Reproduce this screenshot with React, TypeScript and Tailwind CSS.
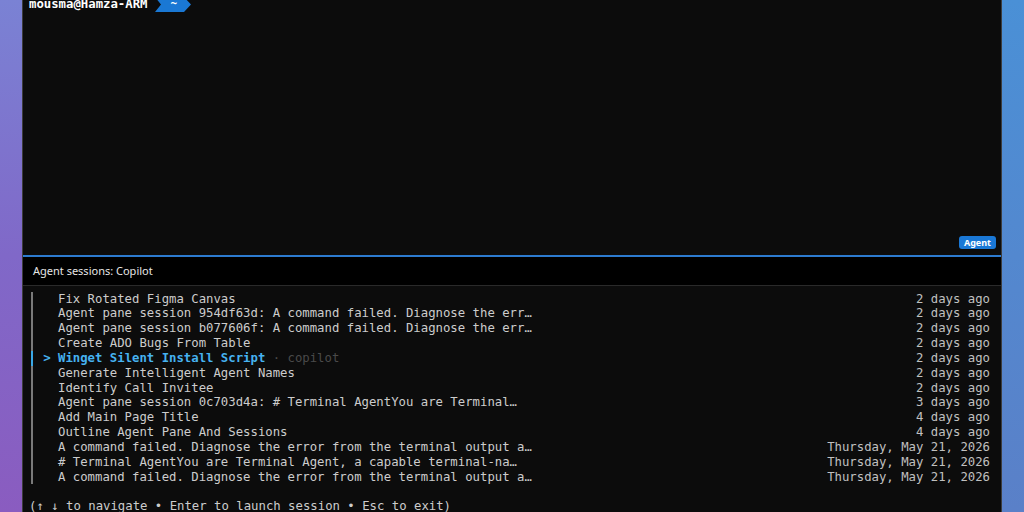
import React from "react";

const rows: { title: string; date: string; selected?: boolean }[] = [
  { title: "Fix Rotated Figma Canvas", date: "2 days ago" },
  { title: "Agent pane session 954df63d: A command failed. Diagnose the err…", date: "2 days ago" },
  { title: "Agent pane session b077606f: A command failed. Diagnose the err…", date: "2 days ago" },
  { title: "Create ADO Bugs From Table", date: "2 days ago" },
  { title: "Winget Silent Install Script", date: "2 days ago", selected: true },
  { title: "Generate Intelligent Agent Names", date: "2 days ago" },
  { title: "Identify Call Invitee", date: "2 days ago" },
  { title: "Agent pane session 0c703d4a: # Terminal AgentYou are Terminal…", date: "3 days ago" },
  { title: "Add Main Page Title", date: "4 days ago" },
  { title: "Outline Agent Pane And Sessions", date: "4 days ago" },
  { title: "A command failed. Diagnose the error from the terminal output a…", date: "Thursday, May 21, 2026" },
  { title: "# Terminal AgentYou are Terminal Agent, a capable terminal-na…", date: "Thursday, May 21, 2026" },
  { title: "A command failed. Diagnose the error from the terminal output a…", date: "Thursday, May 21, 2026" },
];

const mono = "font-['DejaVu_Sans_Mono','Liberation_Mono',monospace] text-[12.3px] leading-[14.83px]";

export default function App() {
  return (
    <div className="flex w-[1024px] h-[512px] overflow-hidden bg-black">
      <div className="w-[22px] h-full bg-gradient-to-b from-[#7a82d4] via-[#8068c8] to-[#8a5cc0] shrink-0" />
      <div className="flex-1 flex flex-col h-full border-x border-[#3c3c3c] bg-[#0c0c0c] min-w-0">
        {/* terminal pane */}
        <div className="relative h-[255px] shrink-0 bg-[#0c0c0c]">
          <div className={`${mono} mt-[-3px] pl-[6px] flex items-center text-white font-bold whitespace-pre`}>
            <span>mousma@Hamza-ARM </span>
            <span className="relative inline-flex items-center justify-center w-[36px] h-[14.83px]">
              <svg className="absolute inset-0" width="36" height="15" viewBox="0 0 36 15">
                <polygon points="0,0 29,0 36,7.5 29,15 0,15 6,7.5" fill="#1a78d4" />
              </svg>
              <span className="relative text-white text-[11px] ml-[2px]">~</span>
            </span>
          </div>
          <div className="absolute right-[5px] bottom-[6px] h-[13px] px-[5px] rounded-[3px] bg-[#1a78d6] flex items-center text-white text-[9px] font-bold font-['Noto_Sans',sans-serif] leading-none">
            Agent
          </div>
        </div>
        <div className="h-[2px] bg-[#2d7bd0] shrink-0" />
        {/* header */}
        <div className="h-[29px] shrink-0 bg-black flex items-center pl-[10px] text-[11px] text-[#e6e6e6] font-['Noto_Sans',sans-serif] border-b border-[#2a2a2a]">
          Agent sessions: Copilot
        </div>
        {/* list */}
        <div className={`flex-1 bg-[#0c0c0c] ${mono} text-[#cccccc] pt-[5.6px]`}>
          <div className="ml-[8px] mr-[11px] flex">
            <div className="w-[2px] flex flex-col shrink-0">
              {rows.map((r, i) => (
                <div key={i} className={`h-[14.83px] ${r.selected ? "bg-[#3aa8e6]" : "bg-[#7a7a7a]"}`} />
              ))}
            </div>
            <div className="flex-1 pl-[10.2px] flex flex-col min-w-0">
              {rows.map((r, i) => (
                <div key={i} className="flex justify-between whitespace-pre h-[14.83px]">
                  {r.selected ? (
                    <span>
                      <span className="text-[#46b2f0] font-bold">{"> "}</span>
                      <span className="text-[#46b2f0] font-bold">{r.title}</span>
                      <span className="text-[#4a4a4a]"> · copilot</span>
                    </span>
                  ) : (
                    <span>{"  " + r.title}</span>
                  )}
                  <span className="text-[#c0c0c0]">{r.date}</span>
                </div>
              ))}
            </div>
          </div>
          <div className="mt-[14.83px] pl-[6px] whitespace-pre text-[#cccccc]">
            (↑ ↓ to navigate • Enter to launch session • Esc to exit)
          </div>
        </div>
      </div>
      <div className="w-[22px] h-full bg-gradient-to-b from-[#4a90d6] to-[#5a80c8] shrink-0" />
    </div>
  );
}
